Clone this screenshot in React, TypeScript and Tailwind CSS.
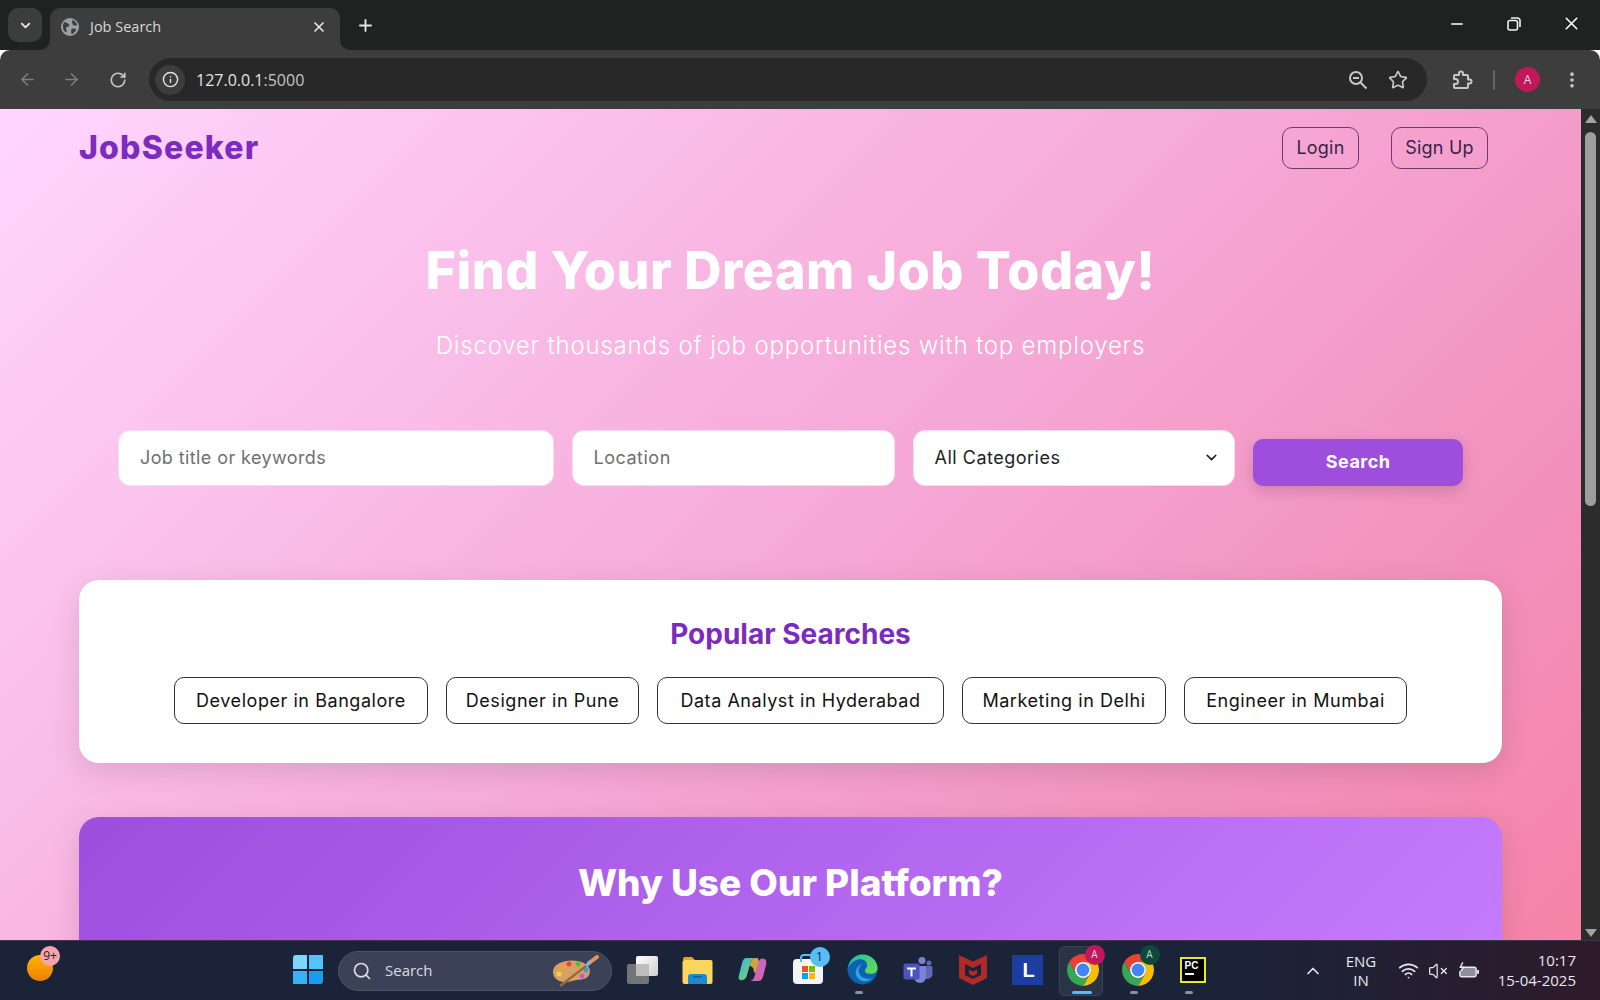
import { ArrowLeft, ArrowRight, ChevronDown, ChevronUp, EllipsisVertical, Info, Minus, Plus, RotateCw, Search, Star, VolumeX, Wifi, X } from "lucide-react";
import { ReactNode } from "react";

const popular = [
  { label: "Developer in Bangalore", width: "w-[254px]" },
  { label: "Designer in Pune", width: "w-[193px]" },
  { label: "Data Analyst in Hyderabad", width: "w-[287px]" },
  { label: "Marketing in Delhi", width: "w-[204px]" },
  { label: "Engineer in Mumbai", width: "w-[223px]" },
];

function ChromeIcon({ badge, badgeText }: { badge: string; badgeText: string }) {
  return (
    <div className="relative w-[32px] h-[32px]">
      <svg viewBox="2 2 20 20" className="w-[32px] h-[32px]">
        <path d="M3.34 7A10 10 0 0 1 20.66 7H12A5 5 0 0 0 7.67 14.5Z" fill="#ea4335" />
        <path d="M20.66 7A10 10 0 0 1 12 22L16.33 14.5A5 5 0 0 0 12 7Z" fill="#fbbc04" />
        <path d="M12 22A10 10 0 0 1 3.34 7L7.67 14.5A5 5 0 0 0 16.33 14.5Z" fill="#34a853" />
        <circle cx="12" cy="12" r="5" fill="#fff" />
        <circle cx="12" cy="12" r="4" fill="#4285f4" />
      </svg>
      <div className={`absolute -top-[9px] -right-[6px] w-[20px] h-[20px] rounded-full flex items-center justify-center text-[10px] font-['Open_Sans',sans-serif] ${badge} ${badgeText}`}>A</div>
    </div>
  );
}

function Slot({ children, dot }: { children: ReactNode; dot?: boolean }) {
  return (
    <div className="relative w-[55px] h-full flex items-center justify-center pb-[2px]">
      {children}
      {dot && <div className="absolute bottom-[6px] left-[20px] w-[8px] h-[3px] rounded-full bg-[#8c919c]" />}
    </div>
  );
}

function BrowserChrome() {
  return (
    <div className="shrink-0 font-['Open_Sans',sans-serif]">
      <div className="h-[50px] bg-[#202221] flex items-end text-[#e3e3e3]">
        <div className="w-[34px] h-[34px] ml-[8px] mb-[8px] rounded-[10px] bg-[#3d3d3d] flex items-center justify-center">
          <ChevronDown size={15} strokeWidth={3} />
        </div>
        <div className="relative w-[290px] h-[42px] ml-[8px] bg-[#3d3d3d] rounded-t-[10px] flex items-center pl-[11px] pr-[13px] pb-[5px]">
          <svg viewBox="0 0 20 20" className="w-[18px] h-[18px]">
            <circle cx="10" cy="10" r="10" fill="#9aa0a6" />
            <path d="M3 5c3-1 4 1 6 2 1 2-1 3-3 3-1 2 1 4 0 6-3-1-5-5-3-11zM13 2c2 1 4 3 5 6-2 0-3 1-4 0-2-1-2-4-1-6zM12 12c2-1 4 0 5 1-1 2-3 4-5 5-1-2-1-4 0-6z" fill="#3d3d3d" />
          </svg>
          <span className="ml-[11px] text-[14.5px] text-[#d8d8d8]">Job Search</span>
          <X size={16} strokeWidth={2.6} className="ml-auto" />
          <div className="absolute -right-[10px] bottom-0 w-[10px] h-[10px] bg-[#3d3d3d]"><div className="w-full h-full bg-[#202221] rounded-bl-[10px]" /></div>
          <div className="absolute -left-[10px] bottom-0 w-[10px] h-[10px] bg-[#3d3d3d]"><div className="w-full h-full bg-[#202221] rounded-br-[10px]" /></div>
        </div>
        <Plus size={19} strokeWidth={2.4} className="ml-[16px] mb-[15px]" />
        <div className="ml-auto flex items-center h-full pb-[3px] text-white">
          <Minus size={18} strokeWidth={2} className="mr-[41px]" />
          <svg viewBox="0 0 14 14" className="w-[14px] h-[14px] mr-[40px]" fill="none" stroke="#f2f2f2" strokeWidth="1.6">
            <rect x="1" y="3.5" width="9.5" height="9.5" rx="2" />
            <path d="M4 1h6.5A2.5 2.5 0 0 1 13 3.5V10" />
          </svg>
          <X size={21} strokeWidth={1.8} className="mr-[18px]" />
        </div>
      </div>
      <div className="h-[59px] bg-[#3d3d3d] rounded-tl-[10px] rounded-tr-[10px] flex items-center text-[#c7c7c7]">
        <ArrowLeft size={19} strokeWidth={2} className="ml-[18px] text-[#7d7d7d]" />
        <ArrowRight size={19} strokeWidth={2} className="ml-[25px] text-[#7d7d7d]" />
        <RotateCw size={18} strokeWidth={2.2} className="ml-[28px]" />
        <div className="ml-[22px] w-[1278px] h-[43px] rounded-full bg-[#282828] flex items-center pl-[6px] pr-[19px]">
          <div className="w-[30px] h-[30px] rounded-full bg-[#3d3d3d] flex items-center justify-center">
            <Info size={17} strokeWidth={2} className="text-[#e3e3e3]" />
          </div>
          <span className="ml-[11px] text-[16px] text-[#e3e3e3]">127.0.0.1<span className="text-[#c4c4c4]">:5000</span></span>
          <svg viewBox="0 0 20 20" className="ml-auto w-[20px] h-[20px]" fill="none" stroke="#c7c7c7" strokeWidth="2">
            <circle cx="8" cy="8" r="6" />
            <path d="M5 8h6M12.500 12.500 18.500 18.500" />
          </svg>
          <Star size={20} strokeWidth={2} className="ml-[20px]" />
        </div>
        <svg viewBox="0 0 24 24" className="ml-[23px] w-[24px] h-[24px]" fill="none" stroke="#c7c7c7" strokeWidth="2" strokeLinejoin="round">
          <path d="M5 7h4V5.500a2 2 0 0 1 4 0V7h4a1 1 0 0 1 1 1v3.500h1.500a2 2 0 0 1 0 4H18V19a1 1 0 0 1-1 1H5a1 1 0 0 1-1-1v-3h1.500a2.500 2.500 0 0 0 0-5H4V8a1 1 0 0 1 1-1z" />
        </svg>
        <div className="ml-[19px] w-[2px] h-[20px] bg-[#666]" />
        <div className="ml-[20px] w-[25px] h-[25px] rounded-full bg-[#c2185b] text-[#f8d7e3] text-[12px] flex items-center justify-center">A</div>
        <EllipsisVertical size={20} strokeWidth={2.4} className="ml-[22px]" />
      </div>
    </div>
  );
}

function Taskbar() {
  return (
    <div className="shrink-0 h-[60px] bg-[linear-gradient(90deg,#1b2338_0%,#1b2338_78%,#2f1a2b_100%)] border-t border-[#3a3550] flex items-center text-[#e6e8ee] font-['Open_Sans',sans-serif]">
      <div className="relative w-[26px] h-[26px] ml-[27px] mb-[6px] rounded-full bg-[linear-gradient(180deg,#fbb703,#ee7d05)]">
        <div className="absolute -top-[9px] left-[13px] w-[20px] h-[20px] rounded-full bg-[#f8a3ac] text-[#222] text-[12px] flex items-center justify-center">9+</div>
      </div>
      <div className="ml-[227px] h-full flex items-center">
        <Slot>
          <div className="grid grid-cols-2 gap-[2px] w-[30px] h-[29px]">
            <div className="bg-[#7fd6fd] rounded-tl-[3px]" />
            <div className="bg-[#55c3fb]" />
            <div className="bg-[#37b1f8]" />
            <div className="bg-[#1a9cf3] rounded-br-[3px]" />
          </div>
        </Slot>
        <div className="ml-[3px] mr-[3px] w-[274px] h-[40px] rounded-full bg-[#3b4257] border border-[#4d5468] flex items-center pl-[13px] text-[#d9dce3]">
          <Search size={20} strokeWidth={2} />
          <span className="ml-[13px] text-[15px]">Search</span>
          <svg viewBox="0 0 50 32" className="ml-auto mr-[11px] w-[50px] h-[32px]">
            <path d="M3 17C3 8 16 4 28 6c10 2 14 8 11 14-3 6-12 4-17 6C14 29 3 26 3 17Z" fill="#d9a066" />
            <circle cx="11" cy="12" r="2.500" fill="#f0a030" /><circle cx="19" cy="9" r="2.500" fill="#e8483c" /><circle cx="28" cy="9" r="2.500" fill="#58b947" />
            <circle cx="9" cy="19" r="2.500" fill="#f4d23c" /><circle cx="36" cy="15" r="2.500" fill="#3d9be0" /><circle cx="32" cy="21" r="2.500" fill="#b460d8" />
            <path d="M10 31 40 8" stroke="#9a6a3c" strokeWidth="2.500" />
            <path d="M39 8 47 2" stroke="#e6954a" strokeWidth="4" strokeLinecap="round" />
            <path d="M36 11 41 6" stroke="#7fb4e0" strokeWidth="3" />
          </svg>
        </div>
        <Slot>
          <div className="relative w-[31px] h-[28px]">
            <div className="absolute right-0 top-0 w-[22px] h-[20px] rounded-[2px] bg-[linear-gradient(135deg,#fff,#cfcfcf)]" />
            <div className="absolute left-0 bottom-0 w-[22px] h-[20px] rounded-[2px] bg-[#7d7d7d]/90" />
            <div className="absolute left-[9px] top-[8px] w-[13px] h-[12px] bg-[#bdbdbd]" />
          </div>
        </Slot>
        <Slot>
          <svg viewBox="0 0 31 28" className="w-[31px] h-[28px]">
            <path d="M1 3a2 2 0 0 1 2-2h7l3 3h-12Z" fill="#e8a317" />
            <rect x="0.500" y="4" width="30" height="24" rx="2" fill="#fcd55c" />
            <path d="M6 28v-7a3 3 0 0 1 3-3h13a3 3 0 0 1 3 3v7Z" fill="#1b8ad1" />
            <rect x="11" y="20" width="9" height="1.600" rx="0.800" fill="#0d5f9a" />
          </svg>
        </Slot>
        <Slot>
          <svg viewBox="0 0 30 30" className="w-[29px] h-[29px]">
            <defs>
              <linearGradient id="cop1" x1="0" y1="0" x2="1" y2="1"><stop offset="0" stopColor="#2fb7f0" /><stop offset="1" stopColor="#8cd24c" /></linearGradient>
              <linearGradient id="cop2" x1="0" y1="0" x2="1" y2="1"><stop offset="0" stopColor="#a86be8" /><stop offset="1" stopColor="#f0609a" /></linearGradient>
            </defs>
            <path d="M9 3h8c-3 1-4 4-5 8l-3 11c-1 3-3 4-6 4-2 0-3-2-2-5l3-12C5 5 6 3 9 3Z" fill="url(#cop1)" />
            <path d="M21 27h-8c3-1 4-4 5-8l3-11c1-3 3-5 5-4 3 0 4 3 3 6l-3 12c-1 3-2 5-5 5Z" fill="url(#cop2)" />
            <path d="M12 11c1-4 2-7 5-8h3c2 1 2 4 1 6l-3 10c-1 0-2-3-2-5-1-2-3-3-4-3Z" fill="#e8b13a" opacity="0.900" />
          </svg>
        </Slot>
        <Slot>
          <div className="relative w-[30px] h-[25px] mt-[3px] rounded-[4px] bg-[#f3f3f3]">
            <div className="absolute -top-[5px] left-[7px] w-[16px] h-[8px] rounded-t-[4px] border-[2px] border-b-0 border-[#58bdf5]" />
            <div className="absolute top-[7px] left-[9px] grid grid-cols-2 gap-[1px]">
              <div className="w-[6px] h-[6px] bg-[#f25022]" /><div className="w-[6px] h-[6px] bg-[#7fba00]" />
              <div className="w-[6px] h-[6px] bg-[#00a4ef]" /><div className="w-[6px] h-[6px] bg-[#ffb900]" />
            </div>
            <div className="absolute -top-[12px] -right-[7px] w-[20px] h-[20px] rounded-full bg-[#58bdf5] text-[#10203a] text-[12px] flex items-center justify-center">1</div>
          </div>
        </Slot>
        <Slot dot>
          <svg viewBox="0 0 32 32" className="w-[31px] h-[31px]">
            <defs>
              <linearGradient id="edge1" x1="0" y1="0" x2="1" y2="0.600"><stop offset="0" stopColor="#1dbfb0" /><stop offset="1" stopColor="#5fd85a" /></linearGradient>
            </defs>
            <circle cx="16" cy="16" r="15.500" fill="#0c62b0" />
            <path d="M1 15C2 6 9 .5 16 .5c9 0 15.500 7 15.500 14 0 4-3 6-7 6-3 0-6-1-6-3 0-3 3-3 2-7C20 6 14 4 9 6.500 5 8.500 2 11 1 15Z" fill="url(#edge1)" />
            <path d="M12 17c0-4 3-7 6-7-4 0-9 3-9 9 0 5 4 9 9 9 3 0 6-1 8-3-6 2-14-1-14-8Z" fill="#2ea6e6" />
          </svg>
        </Slot>
        <Slot>
          <svg viewBox="0 0 30 28" className="w-[30px] h-[28px]">
            <circle cx="19" cy="4.500" r="3.500" fill="#7b83d6" />
            <circle cx="26" cy="7" r="2.500" fill="#5f67b8" />
            <path d="M17 10h11a1.500 1.500 0 0 1 1.500 1.500V18a5 5 0 0 1-5 5h-2a5 5 0 0 1-5-5Z" fill="#5f67b8" />
            <path d="M12 10h11v11a6 6 0 0 1-6 6 6 6 0 0 1-6-6Z" fill="#7b83d6" />
            <rect x="0.500" y="7.500" width="16" height="16" rx="2" fill="#4b53bc" />
            <path d="M4 11.500h9v2h-3.500v7h-2v-7H4Z" fill="#fff" />
          </svg>
        </Slot>
        <Slot>
          <svg viewBox="0 0 28 30" className="w-[28px] h-[30px]">
            <path d="M0 0 14 6.500 28 0V23L14 30 0 23Z" fill="#b22a25" />
            <path d="M6 9 14 13 22 9V20L14 24 6 20Z" fill="#1b2338" />
            <path d="M10 14.500 14 16.500 18 14.500V19L14 21 10 19Z" fill="#b22a25" />
          </svg>
        </Slot>
        <Slot>
          <div className="w-[31px] h-[30px] bg-[#1b3ea0] flex items-center justify-center pl-[2px] text-white text-[20px] font-bold font-['Liberation_Sans',sans-serif]">L</div>
        </Slot>
        <Slot>
          <div className="absolute left-[4px] top-[5px] w-[44px] h-[50px] rounded-[5px] bg-[#2b3347] border border-[#3a4257]" />
          <div className="relative"><ChromeIcon badge="bg-[#c2185b]" badgeText="text-[#f8d7e3]" /></div>
          <div className="absolute bottom-[6px] left-[17px] w-[20px] h-[3px] rounded-full bg-[#58bdf5]" />
        </Slot>
        <Slot dot>
          <ChromeIcon badge="bg-[#0d4a3a]" badgeText="text-[#b6dccb]" />
        </Slot>
        <Slot dot>
          <div className="w-[26px] h-[26px] bg-black border-[2px] border-[#e8e82a] pl-[3px] pt-[1px] text-white text-[10px] leading-[11px] font-bold font-['Liberation_Sans',sans-serif]">
            PC
            <div className="w-[9px] h-[2px] mt-[2px] bg-white" />
          </div>
        </Slot>
      </div>
      <ChevronUp size={20} strokeWidth={2} className="ml-[83px]" />
      <div className="ml-[15px] w-[46px] text-center text-[15px] leading-[19px]">ENG<br />IN</div>
      <Wifi size={21} strokeWidth={2} className="ml-[14px]" />
      <VolumeX size={20} strokeWidth={1.5} className="ml-[9px]" />
      <svg viewBox="0 0 22 18" className="ml-[10px] w-[21px] h-[18px]" fill="none" stroke="#e6e8ee" strokeWidth="1.500">
        <path d="M5 5h12a2 2 0 0 1 2 2v6a2 2 0 0 1-2 2H4a2 2 0 0 1-2-2V9" fill="#8d8f99" />
        <path d="M21 8v4" strokeWidth="2" />
        <path d="M5 0 2.500 5h3L3.500 9" />
      </svg>
      <div className="ml-auto mr-[24px] pb-[2px] text-right text-[15px] leading-[20px]">10:17<br />15-04-2025</div>
    </div>
  );
}

function Scrollbar() {
  return (
    <div className="shrink-0 w-[19px] bg-[#2c2c2c] flex flex-col items-center">
      <div className="mt-[6px] w-0 h-0 border-x-[6px] border-x-transparent border-b-[8px] border-b-[#a3a3a3]" />
      <div className="mt-[9px] w-[11px] h-[374px] rounded-full bg-[#9e9e9e]" />
      <div className="mt-auto mb-[3px] w-0 h-0 border-x-[6px] border-x-transparent border-t-[8px] border-t-[#a3a3a3]" />
    </div>
  );
}

export default function App() {
  return (
    <div className="w-[1600px] h-[1000px] flex flex-col overflow-hidden">
      <BrowserChrome />
      <div className="flex-1 flex min-h-0 bg-[#2c2c2c]">
        <main className="flex-1 overflow-hidden px-[79px] bg-[linear-gradient(135deg,#ffd6ff_0%,#f6aad8_50%,#f292be_78%,#f683a8_100%)] font-['Inter',sans-serif]">
          <nav className="h-[77px] flex items-center justify-between pr-[14px]">
            <div className="text-[32px] font-extrabold text-[#7b2cbf] tracking-[1.2px]">JobSeeker</div>
            <div className="flex gap-[32px]">
              <button className="h-[42px] w-[77px] rounded-[10px] border border-[#6d3b6d] text-[18px] tracking-[0.2px] text-[#3c1e4a]">Login</button>
              <button className="h-[42px] w-[97px] rounded-[10px] border border-[#6d3b6d] text-[18px] tracking-[0.2px] text-[#3c1e4a]">Sign Up</button>
            </div>
          </nav>
          <section className="mt-[50px] text-center text-white">
            <h1 className="text-[52px] leading-[70px] font-extrabold tracking-[0.45px]">Find Your Dream Job Today!</h1>
            <p className="mt-[25px] text-[24px] leading-[30px] font-light tracking-[0.8px]">Discover thousands of job opportunities with top employers</p>
          </section>
          <form className="mt-[69px] mx-[39px] flex items-end gap-[18px]">
            <input placeholder="Job title or keywords" className="w-[436px] h-[56px] rounded-[12px] border border-[#f0dff0] bg-white px-[21px] pb-[2px] text-[18px] tracking-[0.4px] outline-none placeholder:text-[#6f6f6f]" />
            <input placeholder="Location" className="w-[323px] h-[56px] rounded-[12px] border border-[#f0dff0] bg-white px-[21px] pb-[2px] text-[18px] tracking-[0.5px] outline-none placeholder:text-[#6f6f6f]" />
            <div className="relative w-[323px] h-[56px] rounded-[12px] border border-[#f0dff0] bg-white px-[21px] pb-[2px] flex items-center text-[18px] tracking-[0.5px] text-[#222]">
              All Categories
              <ChevronDown size={17} strokeWidth={2.2} className="absolute right-[14px] top-[18px]" />
            </div>
            <button type="button" className="w-[210px] h-[47px] pb-[2px] rounded-[10px] bg-[#9d4edd] text-white text-[18px] font-bold tracking-[0.5px] shadow-[0_5px_15px_rgba(0,0,0,0.15)]">Search</button>
          </form>
          <section className="mt-[94px] h-[183px] rounded-[20px] bg-white pt-[37px] shadow-[0_8px_30px_rgba(0,0,0,0.12)] text-center">
            <h2 className="text-[28px] leading-[34px] font-bold text-[#7b2cbf]">Popular Searches</h2>
            <div className="mt-[26px] flex justify-center gap-[18px]">
              {popular.map((p) => (
                <button key={p.label} className={`${p.width} h-[47px] rounded-[10px] border border-[#333] text-[18px] tracking-[0.55px] text-[#111]`}>{p.label}</button>
              ))}
            </div>
          </section>
          <section className="mt-[54px] h-[200px] rounded-[20px] bg-[linear-gradient(135deg,#9d4edd,#c77dff)] pt-[41px] text-center shadow-[0_8px_30px_rgba(0,0,0,0.12)]">
            <h2 className="text-[37px] leading-[50px] font-extrabold text-white">Why Use Our Platform?</h2>
          </section>
        </main>
        <Scrollbar />
      </div>
      <Taskbar />
    </div>
  );
}
